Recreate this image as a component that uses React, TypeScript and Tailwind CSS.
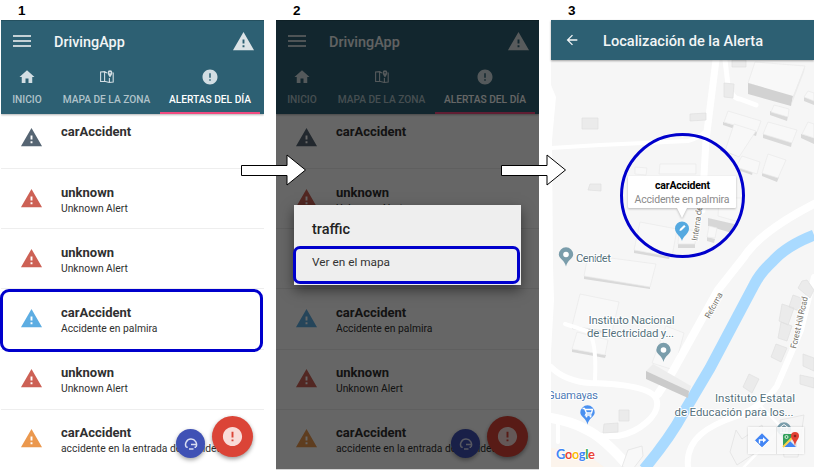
import React from "react";
import { MdArrowBack, MdError, MdHome, MdWarning } from "react-icons/md";

type Alert = { title: string; detail: string; color: string };

const alerts: Alert[] = [
  { title: "carAccident", detail: "", color: "text-[#566573]" },
  { title: "unknown", detail: "Unknown Alert", color: "text-[#cd6155]" },
  { title: "unknown", detail: "Unknown Alert", color: "text-[#cd6155]" },
  { title: "carAccident", detail: "Accidente en palmira", color: "text-[#5dade2]" },
  { title: "unknown", detail: "Unknown Alert", color: "text-[#cd6155]" },
  { title: "carAccident", detail: "accidente en la entrada del cenidet", color: "text-[#eb984e]" },
];

function MapIcon() {
  return (
    <svg width="16" height="14" viewBox="0 0 16 14" fill="none" stroke="currentColor" strokeWidth="1.1">
      <path d="M8 3 5.600 1.600 1.600 2v9.500l4-.3 4.600 1.300 4-.5V2.500M5.600 1.600v9.600M10.400 8v4.500" />
      <path d="M11 .3a2.4 2.4 0 0 0-2.4 2.4C8.600 4.500 11 7.400 11 7.400s2.400-2.900 2.400-4.700A2.400 2.400 0 0 0 11 .3Z" fill="currentColor" stroke="none" />
      <circle cx="11" cy="2.700" r=".8" fill="#2d6073" stroke="none" />
    </svg>
  );
}

function Tab({ icon, label, className }: { icon: React.ReactNode; label: string; className: string }) {
  return (
    <div className={`flex flex-col items-center ${className}`}>
      <div className="flex h-[18px] items-center text-[#d3dee3]">{icon}</div>
      <span className="mt-[7px] whitespace-nowrap text-[10.200px] font-medium leading-[13px]">{label}</span>
    </div>
  );
}

function AlertScreen({ children }: { children?: React.ReactNode }) {
  return (
    <section className="relative h-[449px] w-[263px] overflow-hidden bg-white">
      <header className="flex h-[94px] flex-col border-t border-[#24505f] bg-[#2d6073] shadow-[0_1px_2px_rgba(0,0,0,0.3)]">
        <div className="flex h-[47px] items-center pl-3 pr-[9px]">
          <div className="flex w-[18px] flex-col gap-[3px] pb-[7px]">
            <i className="h-[2px] bg-[#c4d1d6]" />
            <i className="h-[2px] bg-[#c4d1d6]" />
            <i className="h-[2px] bg-[#c4d1d6]" />
          </div>
          <h1 className="ml-[23px] flex-1 pb-[4px] text-[14.4px] font-medium leading-5 text-[#f2f5f6]">DrivingApp</h1>
          <MdWarning className="mb-[6px] size-[23px] text-[#dbe3e6]" />
        </div>
        <nav className="flex flex-1">
          <Tab className="w-[52px] text-[#b0c3ca]" icon={<MdHome size={18} />} label="INICIO" />
          <Tab className="w-[107px] text-[#b0c3ca]" icon={<MapIcon />} label="MAPA DE LA ZONA" />
          <Tab className="w-[100px] border-b-2 border-[#f04b80] text-white" icon={<MdError size={18} />} label="ALERTAS DEL DÍA" />
        </nav>
      </header>
      <ul>
        {alerts.map((a, i) => (
          <li key={i} className="flex h-[60.2px] border-b border-[#eeeeee] pl-[18.500px] first:h-[55px] first:pt-0 not-first:pt-[5.500px]">
            <MdWarning className={`mt-[12px] size-[23px] shrink-0 ${a.color}`} />
            <div className="ml-[18.500px] whitespace-nowrap pt-[9px] text-[#303030]">
              <div className="text-[13px] font-bold leading-[17px]">{a.title}</div>
              <div className="pt-px text-[10.300px] leading-[14px]">{a.detail}</div>
            </div>
          </li>
        ))}
      </ul>
      <div className="absolute left-[175px] top-[409px] flex size-[29px] items-center justify-center rounded-full bg-[#3f51b5] shadow-[0_2px_4px_rgba(0,0,0,0.35)]">
        <svg width="14" height="14" viewBox="0 0 14 14" fill="none" stroke="#d9ddf2" strokeWidth="1.500">
          <path d="M2.200 10.200A5.500 5.500 0 1 1 12 10M7 7.500h5.500M5 12h4.500" />
          <path d="M2.200 10.200h1.500M10.500 10.200H12" />
        </svg>
      </div>
      <div className="absolute left-[211px] top-[396px] flex size-[41px] items-center justify-center rounded-full bg-[#db4437] text-[#f9dcd9] shadow-[0_2px_4px_rgba(0,0,0,0.4)]">
        <MdError size={23} />
      </div>
      {children}
    </section>
  );
}

function Building({ top, side }: { top: string; side?: string }) {
  return (
    <g>
      {side && <polygon points={side} fill="#d9d9d9" />}
      <polygon points={top} fill="#f8f8f8" stroke="#e9e9e9" strokeWidth=".7" />
    </g>
  );
}

function Pin({ x, y, fill, children }: { x: number; y: number; fill: string; children?: React.ReactNode }) {
  return (
    <g transform={`translate(${x} ${y})`}>
      <path d="M0 12C-1 6-7.200 4-7.200 0A7.200 7.200 0 0 1 7.200 0C7.200 4 1 6 0 12Z" fill={fill} />
      {children}
    </g>
  );
}

function MapCanvas() {
  return (
    <svg className="block h-[407px] w-[263px]" viewBox="551 60 263 407">
      <rect x="551" y="60" width="263" height="407" fill="#f6f6f6" />
      <path d="M551 85 556 97 552 140 553 265 554 300 551 352Z" fill="#fff" />
      <path d="M551 448 585 453 604 467H551Z" fill="#fcf4ec" />
      <g fill="#f8f8f8">
        <Building top="755,62 805,66 793,98 748,83" />
        <polygon points="748,83 793,96 791,106 748,94" fill="#d2d2d2" />
        <polygon points="805,66 793,96 791,106 804,72" fill="#ececec" />
        <Building top="728,111 761,121 757,132 724,122" side="723,122 757,132 756,136 723,125" />
        <Building top="734,124 756,131 739,157 725,151" side="720,148 738,151 737,156 720,151" />
        <Building top="768,122 797,130 792,143 763,134" side="763,134 792,142 791,147 763,138" />
        <Building top="774,105 789,109 788,117 771,112" side="770,111 788,116 787,121 770,115" />
        <Building top="808,91 814,93 814,101 804,97" side="804,97 814,100 814,105 804,101" />
        <Building top="808,122 814,124 814,138 802,134" side="801,134 814,138 814,144 801,138" />
        <Building top="742,156 760,162 757,174 736,167" side="735,166 753,171 752,175 735,169" />
        <Building top="768,154 786,160 778,178 762,173" side="762,173 779,177 777,182 762,176" />
        <Building top="660,164 696,164 696,174 659,174" />
        <Building top="635,167 647,168 646,175 635,174" />
        <Building top="640,222 677,229 672,257 634,250" side="634,250 670,256 669,259 634,253" />
        <Building top="679,228 696,231 695,244 678,244" side="678,244 695,244 695,248 678,248" />
        <polygon points="708,218 734,224 732,233 708,226" fill="#d7d7d7" />
        <Building top="709,226 717,228 715,238 707,237" side="707,237 715,239 714,243 707,241" />
        <Building top="719,198 742,198 739,222 718,216" />
        <Building top="588,255 656,264 650,287 584,276" side="584,276 650,285 650,289 584,279" />
        <Building top="580,294 619,302 612,332 572,326" side="572,326 612,331 611,334 572,329" />
        <Building top="577,332 608,340 605,355 572,349" side="572,349 606,355 605,358 572,352" />
        <Building top="666,326 684,333 674,370 652,363" />
      </g>
      <g fill="none" stroke="#fff" strokeLinecap="round" strokeLinejoin="round">
        <path d="M716 60 706 140 702 210" strokeWidth="7" />
        <path d="M551 148 600 145 688 141Q699 138 706 131" strokeWidth="4" />
        <path d="M725 60 728 85Q733 99 740 99L756 105" strokeWidth="5" />
        <path d="M814 204Q760 232 744 257L718 290 673 371 658 394" strokeWidth="8" />
        <path d="M551 367Q565 381 590 383C625 384 656 388 657 402 659 415 640 432 618 436H595" strokeWidth="6" />
        <path d="M551 418Q573 422 585 429 602 436 629 467" strokeWidth="10" />
        <path d="M558 420V442M565 324 587 331Q597 338 595 380" strokeWidth="4" />
        <path d="M814 277 801 330 777 386Q765 405 737 416C710 425 685 438 688 467" strokeWidth="6" />
        <path d="M758 403 779 425M743 468 789 420" strokeWidth="2.500" />
      </g>
      <g fill="#ebebeb" stroke="#e0e0e0" strokeWidth=".7">
        <path d="M582 118h16v11h-16ZM732 60h14v7h-14ZM724 83l10 1-1 14-9-1ZM690 114l16-1v7l-16 1ZM590 184h11v7l-13-1ZM802 281l5-1 7 10-4 8-12-10ZM793 295l11 4-5 12-10-4ZM782 304l12 4-6 17-9-4ZM781 322l11 4-5 15-9-3ZM776 344l11 4-6 14-10-5ZM803 354l11 4v13l-11-5ZM749 374l10 5-7 14-9-6ZM800 375l14 3v10l-14-4ZM619 410h10v11h-10ZM604 424l14-1v9l-15 1Z" />
        <path d="M736 430l6 9 20-14 4 21-29 19-7-13ZM780 420l24-5-6 42h-14Z" fill="#f5f5f5" />
      </g>
      <path d="M814 235Q786 246 773 261 760 273 754 285L710 368 684 412Q670 438 644 469" fill="none" stroke="#a9daff" strokeWidth="11" />
      <path d="M628 450 642 446 643 456 633 469 622 467Z" fill="#f8f8f8" stroke="#e8e8e8" />
      <path d="M646 371 653 364 691 386 689 393Z" fill="#ededed" />
      <path d="M646 371 689 391 688 398 646 379Z" fill="#cbcbcb" />

      <g fontFamily="Roboto, sans-serif" fill="#55717c" stroke="#fff" strokeWidth="2" paintOrder="stroke" strokeLinejoin="round" fontSize="11.500">
        <text x="576" y="262" textLength="35">Cenidet</text>
        <text x="588.500" y="324" textLength="86">Instituto Nacional</text>
        <text x="587" y="336.500" textLength="87">de Electricidad y...</text>
        <text x="715" y="402" textLength="80">Instituto Estatal</text>
        <text x="674.500" y="415.500" textLength="119">de Educación para los...</text>
        <text x="547" y="398.500" textLength="51" fill="#4d79b5">Guamayas</text>
        <g fill="#737067" fontSize="8.500">
          <text transform="translate(697.500 241) rotate(-82)" textLength="43">Interna del R</text>
          <text transform="translate(709.500 319) rotate(-61)" textLength="28">Reforma</text>
          <text transform="translate(796 349) rotate(-77)" textLength="53">Forest Hill Road</text>
        </g>
      </g>

      <Pin x={566} y={254.500} fill="#7a9dab"><circle r="2.800" fill="#fff" /></Pin>
      <Pin x={663.500} y={350} fill="#7a9dab"><circle r="2.800" fill="#fff" /></Pin>
      <Pin x={587.500} y={412.500} fill="#4a90f0">
        <path d="M-5-4h2l2 4.500h5l1-3.500h-7M-1 .5l-1 2h6" fill="none" stroke="#fff" strokeWidth="1.300" />
        <circle cx="-1" cy="4" r="1" fill="#fff" /><circle cx="3" cy="4" r="1" fill="#fff" />
      </Pin>
      <Pin x={784} y={429.500} fill="#7a9dab">
        <path d="M-4-2h8L0-5ZM-3-1v4M0-1v4M3-1v4M-4 3h8" stroke="#fff" fill="none" />
      </Pin>
      <path d="M682 241C681 236 675 234 675 228.500a7 7 0 0 1 14 0C689 234 683 236 682 241Z" fill="#55a9e0" />
      <path d="m679.500 231 .4-2 4.200-4 1.500 1.500-4.200 4Z" fill="#fff" />

      <g className="drop-shadow-[0_1px_1px_rgba(0,0,0,0.25)]">
        <path d="M629 176H735Q736 176 736 177V207Q736 208 735 208H687L682 218 677 208H629Q628 208 628 207V177Q628 176 629 176Z" fill="#fff" />
      </g>
      <g fontFamily="Roboto, sans-serif" textAnchor="middle">
        <text x="682.500" y="189" fontSize="10.500" fontWeight="700" textLength="55">carAccident</text>
        <text x="682" y="203" fontSize="10.500" fill="#8a8a8a" textLength="95">Accidente en palmira</text>
      </g>

      <g className="drop-shadow-[0_0_1px_rgba(0,0,0,0.18)]">
        <rect x="748" y="427" width="56" height="27" fill="#fff" fillOpacity=".88" />
        <path d="M776.500 427v27" stroke="#e4e4e4" />
      </g>
      <path d="m762 433.800 6.500 6.500-6.500 6.500-6.500-6.500Z" fill="#4285f4" stroke="#4285f4" strokeLinejoin="round" />
      <path d="M759.500 443.500v-3.500h4" fill="none" stroke="#fff" strokeWidth="1.400" />
      <path d="m763 437.300 3.200 2.800-3.200 2.600Z" fill="#fff" />
      <path d="M784 434h12v13h-13v-12Z" fill="#34a05b" />
      <path d="m783 447 12-12 2 1v11Z" fill="#e8e9eb" />
      <path d="m784 447 6-6 6 6Z" fill="#4285f4" />
      <path d="m783 447 11-11" stroke="#fbd14b" strokeWidth="2" />
      <circle cx="786.500" cy="437" r="1.500" fill="none" stroke="#fff" strokeWidth=".8" />
      <path d="M795 446C794 440 791 439 791 436a4 4 0 0 1 8 0C799 439 796 440 795 446Z" fill="#e34133" />
      <circle cx="795" cy="436" r="1.300" fill="#84251d" />

      <text x="556" y="458.500" fontFamily="Lato, sans-serif" fontSize="13" fontWeight="700" textLength="39" stroke="#fff" strokeWidth="1.500" paintOrder="stroke">
        <tspan fill="#4285f4">G</tspan><tspan fill="#ea4335">o</tspan><tspan fill="#fbbc05">o</tspan>
        <tspan fill="#4285f4">g</tspan><tspan fill="#34a853">l</tspan><tspan fill="#ea4335">e</tspan>
      </text>
    </svg>
  );
}

function StepLabel({ n }: { n: number }) {
  return <div className="h-5 pl-[17px] pt-px font-['Liberation_Sans',Arial,sans-serif] text-[13.500px] font-bold leading-[19px] text-black">{n}</div>;
}

function StepArrow({ className }: { className: string }) {
  return (
    <svg className={`absolute ${className}`} width="66" height="33" viewBox="0 0 66 33">
      <path d="M.5 11.500H46V1L64.500 16 46 31V21.500H.5Z" fill="#fff" stroke="#000" />
    </svg>
  );
}

export default function App() {
  return (
    <main className="relative flex h-[471px] w-[814px] gap-3 overflow-hidden bg-white pl-px font-[Roboto,sans-serif]">
      <div className="w-[263px] shrink-0">
        <StepLabel n={1} />
        <AlertScreen />
      </div>

      <div className="w-[263px] shrink-0">
        <StepLabel n={2} />
        <AlertScreen>
          <div className="absolute inset-0 bg-black/60">
            <div className="ml-[18px] mt-[185px] flex h-[80px] w-[227px] flex-col bg-[#eeeeee] shadow-[0_5px_12px_rgba(0,0,0,0.5)]">
              <h2 className="pl-[18px] pt-[15px] text-[14.500px] font-medium leading-5 text-[#222]">traffic</h2>
              <div className="-ml-px mt-[6px] h-[38px] w-[227px] rounded-[7px] border-[3px] border-[#0000cc] pl-[16px] pt-[5px] text-[11.800px] leading-4 text-[#333]">
                Ver en el mapa
              </div>
            </div>
          </div>
        </AlertScreen>
        <div className="h-px bg-[#d5d5d5]" />
      </div>

      <div className="w-[263px] shrink-0">
        <StepLabel n={3} />
        <header className="relative flex h-10 items-center bg-[#2d6073] pl-[13px] text-[#f2f5f6] shadow-[0_1px_2px_rgba(0,0,0,0.35)]">
          <MdArrowBack size={16} />
          <h1 className="ml-[23px] pt-[2px] text-[14.600px] font-medium leading-5">Localización de la Alerta</h1>
        </header>
        <MapCanvas />
      </div>

      <div className="absolute left-0 top-[289px] h-[63px] w-[263px] rounded-[9px] border-[3px] border-[#0000cc]" />
      <div className="absolute left-[620px] top-[133px] size-[125px] rounded-full border-[3px] border-[#0000cc]" />
      <StepArrow className="left-[241px] top-[154px]" />
      <StepArrow className="left-[501px] top-[154px]" />
    </main>
  );
}
